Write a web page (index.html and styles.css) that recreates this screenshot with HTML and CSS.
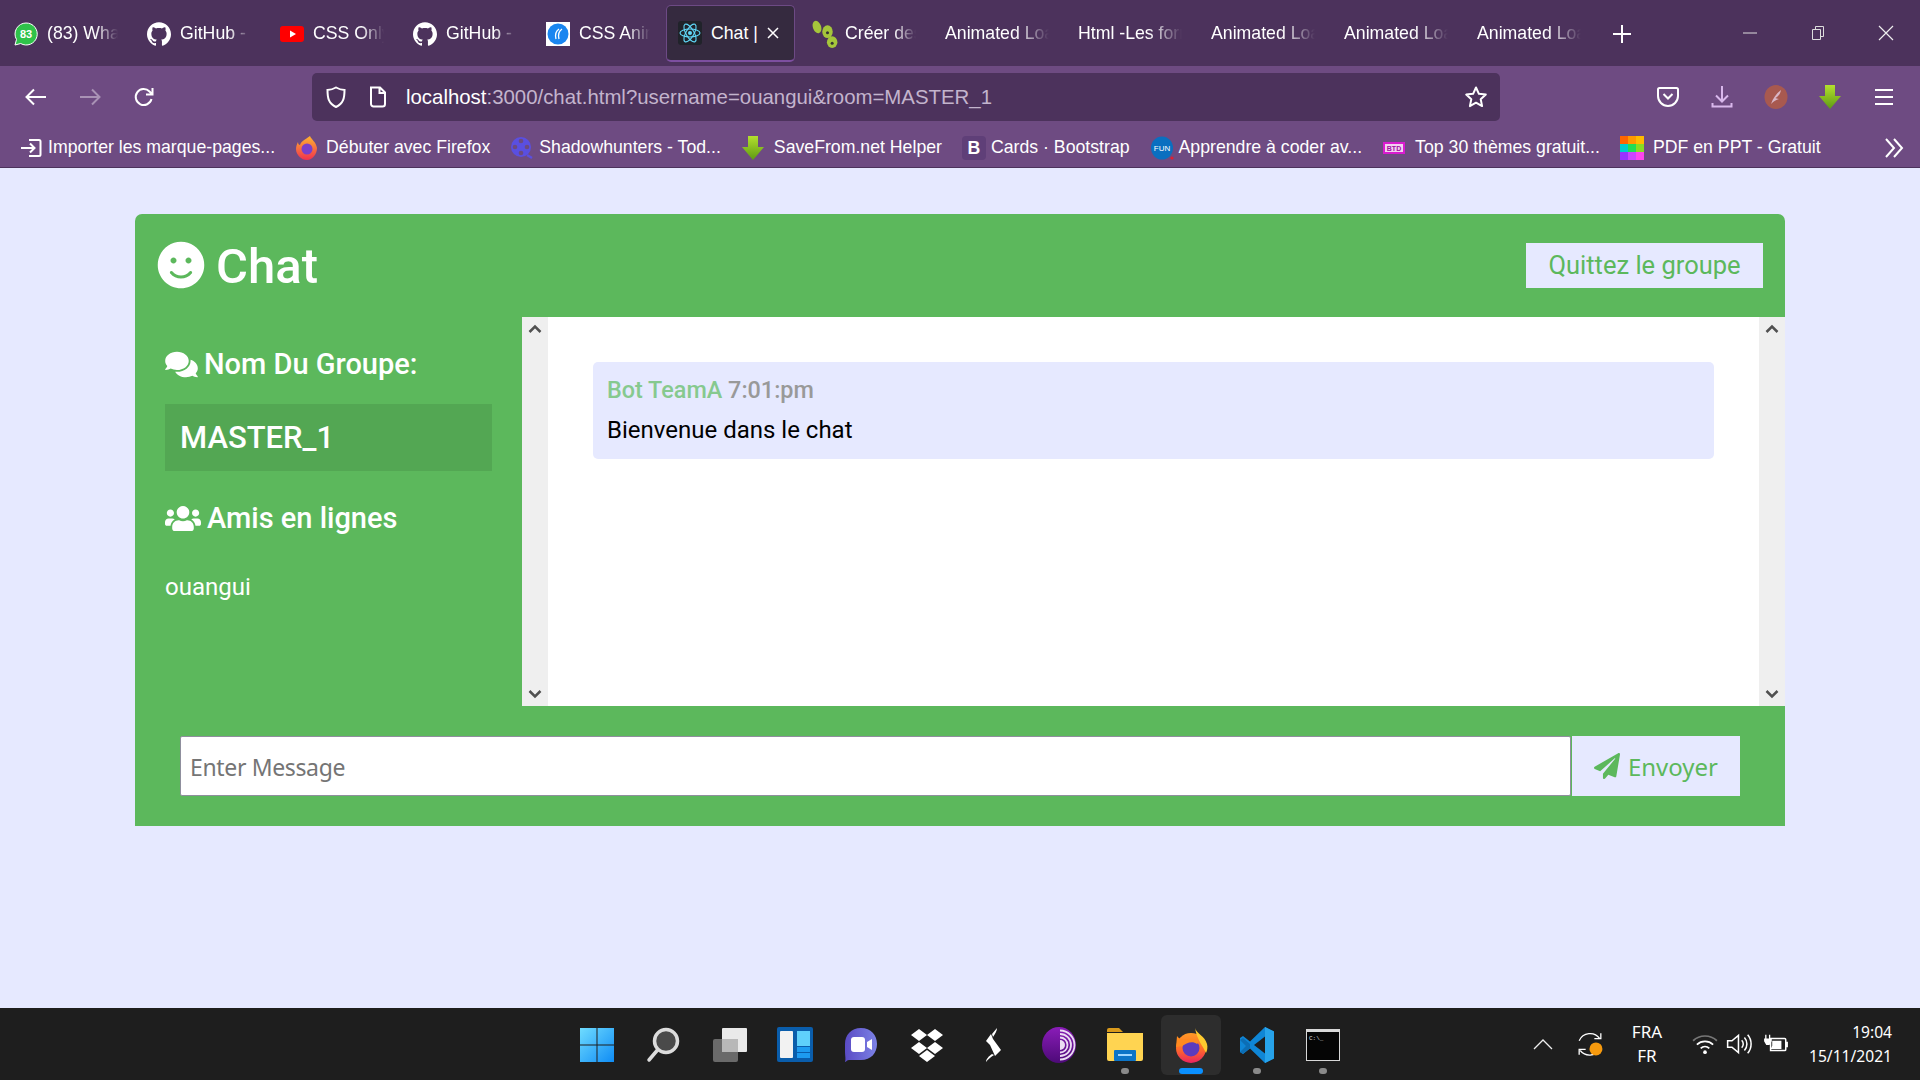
FILE: index.html
```html
<!DOCTYPE html>
<html lang="fr">
<head>
  <meta charset="UTF-8" />
  <title>Chat | TeamA</title>
  <link rel="stylesheet" href="styles.css">
</head>
<body>
  <div class="tabbar">
    <div class="tab">
      <svg class="favicon" viewBox="0 0 24 24"><path d="M12 1a11 11 0 0 0-9.500 16.500L1 23l5.700-1.500A11 11 0 1 0 12 1z" fill="#2fc24a" stroke="#fff" stroke-width="1"/><text x="12" y="16" class="fav-count">83</text></svg>
      <span class="tab-label">(83) WhatsApp</span>
    </div>
    <div class="tab">
      <svg class="favicon" viewBox="0 0 24 24"><path fill="#fff" d="M12 .297c-6.630 0-12 5.373-12 12 0 5.303 3.438 9.800 8.205 11.385.600.113.820-.258.820-.577 0-.285-.010-1.040-.015-2.040-3.338.724-4.042-1.610-4.042-1.610C4.422 18.070 3.633 17.700 3.633 17.700c-1.087-.744.084-.729.084-.729 1.205.084 1.838 1.236 1.838 1.236 1.070 1.835 2.809 1.305 3.495.998.108-.776.417-1.305.760-1.605-2.665-.300-5.466-1.332-5.466-5.930 0-1.310.465-2.380 1.235-3.220-.135-.303-.540-1.523.105-3.176 0 0 1.005-.322 3.300 1.230.960-.267 1.980-.399 3-.405 1.020.006 2.040.138 3 .405 2.280-1.552 3.285-1.230 3.285-1.230.645 1.653.240 2.873.120 3.176.765.840 1.230 1.910 1.230 3.220 0 4.610-2.805 5.625-5.475 5.920.420.360.810 1.096.810 2.220 0 1.606-.015 2.896-.015 3.286 0 .315.210.690.825.570C20.565 22.092 24 17.592 24 12.297c0-6.627-5.373-12-12-12"/></svg>
      <span class="tab-label">GitHub - ouangui</span>
    </div>
    <div class="tab">
      <svg class="favicon" viewBox="0 0 24 24"><rect y="4" width="24" height="16" rx="3" fill="#f00"/><path d="M10 8.500l6 3.500-6 3.500z" fill="#fff"/></svg>
      <span class="tab-label">CSS Only Loader</span>
    </div>
    <div class="tab">
      <svg class="favicon" viewBox="0 0 24 24"><path fill="#fff" d="M12 .297c-6.630 0-12 5.373-12 12 0 5.303 3.438 9.800 8.205 11.385.600.113.820-.258.820-.577 0-.285-.010-1.040-.015-2.040-3.338.724-4.042-1.610-4.042-1.610C4.422 18.070 3.633 17.700 3.633 17.700c-1.087-.744.084-.729.084-.729 1.205.084 1.838 1.236 1.838 1.236 1.070 1.835 2.809 1.305 3.495.998.108-.776.417-1.305.760-1.605-2.665-.300-5.466-1.332-5.466-5.930 0-1.310.465-2.380 1.235-3.220-.135-.303-.540-1.523.105-3.176 0 0 1.005-.322 3.300 1.230.960-.267 1.980-.399 3-.405 1.020.006 2.040.138 3 .405 2.280-1.552 3.285-1.230 3.285-1.230.645 1.653.240 2.873.120 3.176.765.840 1.230 1.910 1.230 3.220 0 4.610-2.805 5.625-5.475 5.920.420.360.810 1.096.810 2.220 0 1.606-.015 2.896-.015 3.286 0 .315.210.690.825.570C20.565 22.092 24 17.592 24 12.297c0-6.627-5.373-12-12-12"/></svg>
      <span class="tab-label">GitHub - ouangui</span>
    </div>
    <div class="tab">
      <svg class="favicon" viewBox="0 0 24 24"><rect width="24" height="24" fill="#fff"/><circle cx="12" cy="12" r="10.500" fill="#1a86f0"/><path d="M13 7c-3 2-4 6-3 10M16 7c-3 2-4 6-3 10" fill="none" stroke="#fff" stroke-width="1.300"/></svg>
      <span class="tab-label">CSS Animation</span>
    </div>
    <div class="tab tab-active">
      <svg class="favicon" viewBox="0 0 24 24"><rect width="24" height="24" rx="3" fill="#20232a"/><g fill="none" stroke="#61dafb" stroke-width="1.100"><ellipse cx="12" cy="12" rx="10" ry="4"/><ellipse cx="12" cy="12" rx="10" ry="4" transform="rotate(60 12 12)"/><ellipse cx="12" cy="12" rx="10" ry="4" transform="rotate(120 12 12)"/></g><circle cx="12" cy="12" r="2" fill="#61dafb"/></svg>
      <span class="tab-label tab-label-short">Chat |</span>
      <svg class="tab-close" viewBox="0 0 12 12"><path d="M1 1l10 10M11 1L1 11" stroke="#fff" stroke-width="1.500"/></svg>
    </div>
    <div class="tab">
      <svg class="favicon favicon-wide" viewBox="0 0 24 24"><g fill="#a5c63b"><ellipse cx="6" cy="6" rx="3.500" ry="5.500" transform="rotate(-20 6 6)"/><ellipse cx="15" cy="10" rx="4.500" ry="5.500"/><ellipse cx="19" cy="19" rx="4.500" ry="5"/></g><circle cx="15" cy="11" r="1.300" fill="#333"/><circle cx="19" cy="20" r="1.300" fill="#333"/></svg>
      <span class="tab-label">Créer des animations</span>
    </div>
    <div class="tab"><span class="tab-label">Animated Loaders</span></div>
    <div class="tab"><span class="tab-label">Html -Les formulaires</span></div>
    <div class="tab"><span class="tab-label">Animated Loaders</span></div>
    <div class="tab"><span class="tab-label">Animated Loaders</span></div>
    <div class="tab"><span class="tab-label">Animated Loaders</span></div>
    <svg class="new-tab" viewBox="0 0 18 18"><path d="M9 0v18M0 9h18" stroke="#fff" stroke-width="2"/></svg>
    <div class="window-controls">
      <div class="win-btn"><svg viewBox="0 0 16 16"><path d="M1 8h14" stroke="#ddd" stroke-width="1"/></svg></div>
      <div class="win-btn"><svg viewBox="0 0 16 16"><path d="M2.500 4.500h8v10h-8zM5.500 4V1.500h8v10H11" fill="none" stroke="#ddd" stroke-width="1"/></svg></div>
      <div class="win-btn"><svg viewBox="0 0 16 16"><path d="M1 1l14 14M15 1L1 15" stroke="#eee" stroke-width="1.200"/></svg></div>
    </div>
  </div>

  <div class="toolbar">
    <div class="tool-btn"><svg viewBox="0 0 24 24"><path d="M22 12H3M10 4.500L2.500 12l7.500 7.500" fill="none" stroke="#fff" stroke-width="2"/></svg></div>
    <div class="tool-btn"><svg viewBox="0 0 24 24"><path d="M2 12h19M14 4.500l7.500 7.500-7.500 7.500" fill="none" stroke="#a992b5" stroke-width="2"/></svg></div>
    <div class="tool-btn"><svg viewBox="0 0 24 24"><path d="M19.500 14a8 8 0 1 1-2-7.500L20 9M20.500 3v6.500H14" fill="none" stroke="#fff" stroke-width="2"/></svg></div>
    <div class="urlbar">
      <svg class="url-icon" viewBox="0 0 24 24"><path d="M12 2.500c3 1.700 5.500 2.300 8.500 2.500 0 8-1 13.500-8.500 17C4.500 18.500 3.500 13 3.500 5c3-.2 5.500-.8 8.500-2.500z" fill="none" stroke="#fff" stroke-width="2"/></svg>
      <svg class="url-icon" viewBox="0 0 24 24"><path d="M5 2.500h9l5 5V19a2.500 2.500 0 0 1-2.500 2.500h-9A2.500 2.500 0 0 1 5 19zM13.500 2.500V8H19" fill="none" stroke="#fff" stroke-width="2"/></svg>
      <span class="url-text"><span class="url-host">localhost</span>:3000/chat.html?username=ouangui&amp;room=MASTER_1</span>
      <svg class="url-icon url-star" viewBox="0 0 24 24"><path d="M12 2.500l2.900 6.300 6.900.8-5.100 4.700 1.400 6.800-6.100-3.400-6.100 3.400 1.400-6.800L2.200 9.600l6.900-.8z" fill="none" stroke="#fff" stroke-width="2" stroke-linejoin="round"/></svg>
    </div>
    <div class="tool-group">
      <div class="tool-btn"><svg viewBox="0 0 24 24"><path d="M3.500 3h17a1.500 1.500 0 0 1 1.500 1.500V11a10 10 0 0 1-20 0V4.500A1.500 1.500 0 0 1 3.500 3zM7.500 9l4.500 4.500L16.500 9" fill="none" stroke="#fff" stroke-width="2"/></svg></div>
      <div class="tool-btn"><svg viewBox="0 0 24 24"><path d="M12 1v15M6 10.500l6 6 6-6M2.500 18v3.500h19V18" fill="none" stroke="#d9b8ec" stroke-width="2"/></svg></div>
      <div class="tool-btn"><svg viewBox="0 0 24 24"><ellipse cx="12" cy="12" rx="11.500" ry="12" fill="#a8594f"/><path d="M17 5C13 8 9 13 7 19c3-3 5-4 8-5-2-.2-3-.5-3.500-1C15 11 16.500 8 17 5z" fill="#d9b6c6"/></svg></div>
      <div class="tool-btn"><svg viewBox="0 0 24 24"><defs><linearGradient id="sf" x1="0" y1="0" x2="0" y2="1"><stop offset="0" stop-color="#b4e02e"/><stop offset="1" stop-color="#5d9a12"/></linearGradient></defs><path d="M7 0h10v11h6L12 24 1 11h6z" fill="url(#sf)"/></svg></div>
      <div class="tool-btn"><svg viewBox="0 0 24 24"><path d="M3 5h18M3 12h18M3 19h18" stroke="#fff" stroke-width="2"/></svg></div>
    </div>
  </div>

  <div class="bookmarks">
    <div class="bookmark bookmark-narrow">
      <svg class="bm-icon" viewBox="0 0 24 24"><path d="M10 4h10a1.500 1.500 0 0 1 1.500 1.500v13A1.500 1.500 0 0 1 20 20H10M2 12h13M11 7.500l4.500 4.500-4.500 4.500" fill="none" stroke="#fff" stroke-width="2"/></svg>
      Importer les marque-pages...
    </div>
    <div class="bookmark">
      <svg class="bm-icon" viewBox="0 0 24 24"><defs><linearGradient id="ffb" x1="0" y1="0" x2="0" y2="1"><stop offset="0" stop-color="#ffb52e"/><stop offset="1" stop-color="#f0304f"/></linearGradient></defs><path d="M15 0c1 3 6 6 7 12 0 6-4.500 12-10 12S1 19 1 13c0-3 1-5 2-7 0 2 1 3 2 3 1-4 5-5 10-9z" fill="url(#ffb)"/><circle cx="12" cy="13" r="5.500" fill="#7b3fc9"/></svg>
      Débuter avec Firefox
    </div>
    <div class="bookmark bookmark-narrow">
      <svg class="bm-icon" viewBox="0 0 24 24"><circle cx="11" cy="11" r="10" fill="#5a4fe0"/><g fill="#6c4a80"><circle cx="11" cy="5" r="2.300"/><circle cx="11" cy="17" r="2.300"/><circle cx="5" cy="11" r="2.300"/><circle cx="17" cy="11" r="2.300"/></g><path d="M17 19l5 3" stroke="#5a4fe0" stroke-width="2.500"/></svg>
      Shadowhunters - Tod...
    </div>
    <div class="bookmark bookmark-wide">
      <svg class="bm-icon" viewBox="0 0 24 24"><path d="M7 0h10v11h6L12 24 1 11h6z" fill="url(#sf)"/></svg>
      SaveFrom.net Helper
    </div>
    <div class="bookmark bookmark-narrow">
      <span class="bm-b">B</span>
      Cards · Bootstrap
    </div>
    <div class="bookmark bookmark-narrow">
      <svg class="bm-icon" viewBox="0 0 24 24"><ellipse cx="12" cy="12" rx="11" ry="11.500" fill="#0a6fc0"/><text x="12" y="15" class="fav-fun">FUN</text><circle cx="22" cy="22" r="1.600" fill="#e02030"/></svg>
      Apprendre à coder av...
    </div>
    <div class="bookmark bookmark-wide">
      <svg class="bm-icon" viewBox="0 0 24 24"><rect x="1" y="6" width="22" height="12" fill="#d91bd0"/><rect x="3" y="8" width="18" height="8" fill="#f3d1f0"/><text x="12" y="15" class="fav-btd">BTD</text></svg>
      Top 30 thèmes gratuit...
    </div>
    <div class="bookmark bookmark-wide">
      <svg class="bm-icon" viewBox="0 0 24 24"><rect width="8" height="8" fill="#f60"/><rect x="8" width="8" height="8" fill="#f90"/><rect x="16" width="8" height="8" fill="#fb0"/><rect y="8" width="8" height="8" fill="#0cc"/><rect x="8" y="8" width="8" height="8" fill="#2d5"/><rect x="16" y="8" width="8" height="8" fill="#8d2"/><rect y="16" width="8" height="8" fill="#93f"/><rect x="8" y="16" width="8" height="8" fill="#c4f"/><rect x="16" y="16" width="8" height="8" fill="#f4e"/></svg>
      PDF en PPT - Gratuit
    </div>
    <svg class="bm-more" viewBox="0 0 24 24"><path d="M4 3l8 9-8 9M12 3l8 9-8 9" fill="none" stroke="#fff" stroke-width="2"/></svg>
  </div>

  <main class="page">
    <div class="chat-container">
      <header class="chat-header">
        <h1 class="chat-title">
          <svg class="smile" viewBox="0 0 496 512"><path fill="#fff" d="M248 8C111 8 0 119 0 256s111 248 248 248 248-111 248-248S385 8 248 8zm80 168c17.700 0 32 14.300 32 32s-14.300 32-32 32-32-14.300-32-32 14.300-32 32-32zm-160 0c17.700 0 32 14.300 32 32s-14.300 32-32 32-32-14.300-32-32 14.300-32 32-32zm194.800 170.200C334.300 380.400 292.500 400 248 400s-86.300-19.600-114.800-53.800c-13.600-16.300 11-36.700 24.600-20.500 22.400 26.900 55.200 42.200 90.200 42.200s67.800-15.400 90.200-42.200c13.400-16.200 38.100 4.200 24.600 20.500z"/></svg>
          <span class="chat-word">Chat</span>
        </h1>
        <a class="btn-leave">Quittez le groupe</a>
      </header>

      <div class="chat-main">
        <aside class="sidebar">
          <h3 class="side-title first">
            <svg class="side-icon" viewBox="0 0 576 512"><path fill="#fff" d="M416 192c0-88.400-93.100-160-208-160S0 103.600 0 192c0 34.300 14.100 65.900 38 92-13.400 30.200-35.500 54.200-35.800 54.500-2.200 2.300-2.800 5.700-1.500 8.700S4.800 352 8 352c36.600 0 66.900-12.300 88.700-25 32.200 15.700 70.300 25 111.300 25 114.900 0 208-71.600 208-160zm122 220c23.900-26 38-57.700 38-92 0-66.900-53.500-124.200-129.300-148.100.9 6.600 1.300 13.300 1.300 20.100 0 105.900-107.700 192-240 192-10.800 0-21.300-.8-31.700-1.900C207.800 439.600 281.800 480 368 480c41 0 79.100-9.200 111.300-25 21.800 12.700 52.100 25 88.700 25 3.200 0 6.100-1.900 7.300-4.800 1.300-2.900.7-6.300-1.500-8.700-.3-.3-22.400-24.200-35.800-54.500z"/></svg>
            Nom Du Groupe:
          </h3>
          <div class="room-name">MASTER_1</div>
          <h3 class="side-title">
            <svg class="side-icon side-icon-wide" viewBox="0 0 640 512"><path fill="#fff" d="M96 224c35.300 0 64-28.700 64-64s-28.700-64-64-64-64 28.700-64 64 28.700 64 64 64zm448 0c35.300 0 64-28.700 64-64s-28.700-64-64-64-64 28.700-64 64 28.700 64 64 64zm32 32h-64c-17.600 0-33.500 7.100-45.100 18.600 40.300 22.100 68.900 62 75.100 109.400h66c17.700 0 32-14.300 32-32v-32c0-35.300-28.700-64-64-64zm-256 0c61.900 0 112-50.100 112-112S381.900 32 320 32 208 82.100 208 144s50.100 112 112 112zm76.800 32h-8.300c-20.800 10-43.900 16-68.500 16s-47.600-6-68.500-16h-8.300C179.600 288 128 339.600 128 403.200V432c0 26.500 21.500 48 48 48h288c26.500 0 48-21.500 48-48v-28.800c0-63.600-51.600-115.200-115.200-115.200zm-223.700-13.400C161.500 263.100 145.600 256 128 256H64c-35.300 0-64 28.700-64 64v32c0 17.700 14.300 32 32 32h65.900c6.300-47.400 34.900-87.300 75.200-109.400z"/></svg>
            Amis en lignes
          </h3>
          <ul class="users">
            <li>ouangui</li>
          </ul>
        </aside>

        <div class="scrollbar">
          <svg class="chevron" viewBox="0 0 14 10"><path d="M1.500 8L7 2.500 12.500 8" fill="none" stroke="#505050" stroke-width="2.500"/></svg>
          <svg class="chevron" viewBox="0 0 14 10"><path d="M1.500 2L7 7.500 12.500 2" fill="none" stroke="#505050" stroke-width="2.500"/></svg>
        </div>
        <div class="messages">
          <div class="message">
            <p class="meta"><span class="meta-name">Bot TeamA</span> 7:01:pm</p>
            <p class="text">Bienvenue dans le chat</p>
          </div>
        </div>
        <div class="scrollbar">
          <svg class="chevron" viewBox="0 0 14 10"><path d="M1.500 8L7 2.500 12.500 8" fill="none" stroke="#505050" stroke-width="2.500"/></svg>
          <svg class="chevron" viewBox="0 0 14 10"><path d="M1.500 2L7 7.500 12.500 2" fill="none" stroke="#505050" stroke-width="2.500"/></svg>
        </div>
      </div>

      <div class="chat-form">
        <input class="msg-input" type="text" placeholder="Enter Message" />
        <button class="btn-send">
          <svg class="send-icon" viewBox="0 0 512 512"><path fill="#5cb85c" d="M476 3.200L12.500 270.600c-18.100 10.400-15.800 35.600 2.200 43.200L121 358.400l287.300-253.200c5.500-4.900 13.300 2.600 8.600 8.300L176 407v80.500c0 23.600 28.500 32.900 42.500 15.800L282 426l124.600 52.200c14.200 6 30.400-2.900 33-18.200l72-432C515 7.800 493.300-6.800 476 3.200z"/></svg>
          Envoyer
        </button>
      </div>
    </div>
  </main>

  <footer class="taskbar">
    <div></div>
    <div class="task-icons">
      <div class="task-item">
        <svg viewBox="0 0 36 36"><defs><linearGradient id="win" x1="0" y1="0" x2="1" y2="1"><stop offset="0" stop-color="#6fdcff"/><stop offset="1" stop-color="#0f8cf5"/></linearGradient></defs><path d="M1 1h16.500v16.500H1zM18.500 1H35v16.500H18.500zM1 18.500h16.500V35H1zM18.500 18.500H35V35H18.500z" fill="url(#win)"/></svg>
      </div>
      <div class="task-item">
        <svg viewBox="0 0 36 36"><circle cx="21" cy="14" r="11.500" fill="#4a4a4a" stroke="#dcdcdc" stroke-width="3.500"/><path d="M12.500 23L4 33" stroke="#dcdcdc" stroke-width="3.500" stroke-linecap="round"/></svg>
      </div>
      <div class="task-item">
        <svg viewBox="0 0 36 36"><rect x="2" y="12" width="25" height="23" rx="2" fill="#6a6a6a"/><rect x="11" y="1" width="25" height="24" rx="1" fill="#e9e9e9"/><rect x="11" y="12" width="16" height="13" fill="#b8b8b8"/></svg>
      </div>
      <div class="task-item">
        <svg viewBox="0 0 36 36"><rect width="36" height="35" rx="2" fill="#0a5dab"/><rect x="3" y="4" width="13" height="27" rx="1" fill="#f2f2f2"/><rect x="20" y="4" width="13" height="15" fill="#5fd0fb"/><rect x="20" y="20" width="13" height="5" fill="#1d9bf0"/><rect x="20" y="26" width="13" height="5" fill="#1d9bf0"/></svg>
      </div>
      <div class="task-item">
        <svg viewBox="0 0 36 36"><defs><linearGradient id="chat" x1="0" y1="0" x2="1" y2="0"><stop offset="0" stop-color="#5a4bc4"/><stop offset="1" stop-color="#7c82e6"/></linearGradient></defs><path d="M18 1c10 0 16 7 16 16s-6 16-16 16H6c-2 0-3 2-4 2 1-3 0-6 0-10V17C2 8 8 1 18 1z" fill="url(#chat)"/><rect x="8" y="10" width="14" height="15" rx="3" fill="#fff"/><path d="M24 15l5-3v11l-5-3z" fill="#fff"/></svg>
      </div>
      <div class="task-item">
        <svg viewBox="0 0 36 36"><g fill="#fff"><path d="M10 2l8 6-8 6-8-6zM26 2l8 6-8 6-8-6zM10 15l8 6-8 6-8-6zM26 15l8 6-8 6-8-6zM18 23l8 6-8 6-8-6z"/></g></svg>
      </div>
      <div class="task-item">
        <svg viewBox="0 0 36 36"><path fill="#fff" d="M16 7l-5 7 4 4 5 11 6-6-8-11zM22 1c0 3-2 6-4 9l-1-3zM17 27l2 1c-3 2-6 4-8 7 0-3 3-6 6-8z"/></svg>
      </div>
      <div class="task-item">
        <svg viewBox="0 0 36 36"><defs><linearGradient id="tor" x1="0" y1="0" x2="0" y2="1"><stop offset="0" stop-color="#8a1cb8"/><stop offset="1" stop-color="#4d0a78"/></linearGradient></defs><ellipse cx="18" cy="18" rx="17" ry="18" fill="url(#tor)"/><g fill="none" stroke="#eadcf2" stroke-width="1.800"><path d="M19 10.500a7.500 7.500 0 0 1 0 15"/><path d="M19 7a11 11 0 0 1 0 22"/><path d="M19 3.500a14.500 14.500 0 0 1 0 29"/></g><path d="M19 13a5 5 0 0 1 0 10z" fill="#eadcf2"/></svg>
      </div>
      <div class="task-item has-dot">
        <svg viewBox="0 0 36 36"><path d="M0 3a2 2 0 0 1 2-2h10l4 4H0z" fill="#d99a1c"/><path d="M0 6h36v26a2 2 0 0 1-2 2H2a2 2 0 0 1-2-2z" fill="#ffd451"/><rect x="7" y="23" width="22" height="11" rx="1" fill="#0c74c7"/><rect x="11" y="27" width="14" height="2" fill="#9fd6ff"/></svg>
      </div>
      <div class="task-item task-active">
        <svg viewBox="0 0 36 36"><defs><linearGradient id="ff" x1="0" y1="0" x2="0" y2="1"><stop offset="0" stop-color="#ff9a26"/><stop offset=".55" stop-color="#ff6a2a"/><stop offset="1" stop-color="#e9235f"/></linearGradient></defs><circle cx="18" cy="21" r="15" fill="url(#ff)"/><path d="M22 1c1 5 10 8 12 16 1 3 0 7-1 9-3-7-9-13-11-25z" fill="#ffcb2e"/><path d="M4 9c2 3 5 4 10 3l-5 7-6 1z" fill="#ff8a1f"/><circle cx="18" cy="21" r="8.500" fill="#5c3bbd"/><path d="M8 20c1-7 8-10 13-8 4 1 5 4 3 5-4-3-10-2-16 3z" fill="#ff8a1f"/></svg>
      </div>
      <div class="task-item has-dot">
        <svg viewBox="0 0 36 36"><path d="M26 0l9 4.500v27L26 36 11 21.500l-7 5.500-3-2v-14l3-2 7 5.500z" fill="#0f86d6"/><path d="M26 9.500L15 18l11 8.500z" fill="#1e1e1e"/><path d="M26 0l9 4.500v27L26 36z" fill="#27a3ea"/><path d="M1 13l3-2 7 6v4l-7 6-3-2 6-6z" fill="#0c6eb5"/></svg>
      </div>
      <div class="task-item has-dot">
        <svg viewBox="0 0 36 36"><rect x="1" y="2" width="34" height="32" fill="#d8d8d8"/><rect x="2" y="5" width="32" height="28" fill="#050505"/><text x="4" y="13" class="term-text">C:\_</text></svg>
      </div>
    </div>
    <div class="tray">
      <svg class="tray-chevron" viewBox="0 0 20 12"><path d="M1 11l9-9 9 9" fill="none" stroke="#eee" stroke-width="1.300"/></svg>
      <div class="tray-sync">
        <svg viewBox="0 0 24 24"><path d="M2 9a11 11 0 0 1 19-2M22 2v5h-6M21 17a11 11 0 0 1-18 1M2 22v-5h6" fill="none" stroke="#fff" stroke-width="1.200"/><circle cx="17.500" cy="16.500" r="6" fill="#f79a0e"/></svg>
      </div>
      <div class="tray-lang"><span>FRA</span><span>FR</span></div>
      <svg class="tray-icon tray-wifi" viewBox="0 0 24 24"><path d="M1 9a16 16 0 0 1 22 0" fill="none" stroke="#777" stroke-width="1.600"/><path d="M4.500 12.500a11 11 0 0 1 15 0M8 16a6 6 0 0 1 8 0" fill="none" stroke="#fff" stroke-width="1.600"/><circle cx="12" cy="19.500" r="1.700" fill="#fff"/></svg>
      <svg class="tray-icon" viewBox="0 0 24 24"><path d="M1.500 9h4l6-5v16l-6-5h-4z" fill="none" stroke="#fff" stroke-width="1.400"/><path d="M14.500 8.500a5 5 0 0 1 0 7M17 6a9 9 0 0 1 0 12M20 3.500a13 13 0 0 1 0 17" fill="none" stroke="#fff" stroke-width="1.400"/></svg>
      <svg class="tray-icon tray-battery" viewBox="0 0 24 24"><path d="M7 7h13a1 1 0 0 1 1 1v9a1 1 0 0 1-1 1H7z" fill="none" stroke="#fff" stroke-width="1.400"/><path d="M8.500 9H17v7.500H7l1.500-3zM1 7h7v2.500L6 13H3L1 9.500zM2 3.500h1.200V7H2zM5.500 3.500h1.200V7H5.500zM21 10h2v5h-2z" fill="#fff"/></svg>
      <div class="clock"><span>19:04</span><span>15/11/2021</span></div>
    </div>
  </footer>
</body>
</html>
```

FILE: styles.css
```css
* {
  box-sizing: border-box;
}
html, body {
  margin: 0;
  height: 100%;
}
body {
  display: flex;
  flex-direction: column;
  height: 1080px;
  overflow: hidden;
  background: #e6e9ff;
  font-family: Roboto, Arial, sans-serif;
}

/* browser chrome */
.tabbar {
  display: flex;
  height: 66px;
  background: #4c325c;
  color: #fff;
  font: 17.7px "Liberation Sans", Arial, sans-serif;
}
.tab {
  display: flex;
  flex: none;
  align-items: center;
  gap: 9px;
  width: 129px;
  height: 57px;
  margin: 5px 2px 0;
  padding: 0 12px 0 11px;
  border: 1px solid transparent;
}
.tab-active {
  margin: 5px 3px 0 1px;
  padding-right: 8px;
  background: #352a3f;
  border: 1px solid #6d4a85;
  border-bottom: 2px solid #7d4fa0;
  border-radius: 5px;
}
.favicon {
  flex: none;
  width: 24px;
  height: 24px;
}
.favicon-wide {
  width: 28px;
  height: 28px;
  margin: 0 -2px 0 -2px;
}
.fav-count {
  font: bold 11px "Liberation Sans", Arial, sans-serif;
  fill: #fff;
  text-anchor: middle;
}
.tab-label {
  flex: 1;
  overflow: hidden;
  white-space: nowrap;
  -webkit-mask-image: linear-gradient(to right, #000 68%, transparent);
  mask-image: linear-gradient(to right, #000 68%, transparent);
}
.tab-label-short {
  flex: none;
  -webkit-mask-image: none;
  mask-image: none;
}
.tab-close {
  flex: none;
  width: 12px;
  height: 12px;
}
.new-tab {
  flex: none;
  width: 18px;
  height: 18px;
  margin: 25px 0 0 17px;
}
.window-controls {
  display: flex;
  margin-left: auto;
}
.win-btn {
  display: flex;
  align-items: center;
  justify-content: center;
  width: 68px;
  height: 66px;
}
.win-btn svg {
  width: 16px;
  height: 16px;
}

.toolbar {
  display: flex;
  align-items: center;
  height: 62px;
  padding: 0 9px;
  background: #6e4b82;
}
.tool-btn {
  display: flex;
  align-items: center;
  justify-content: center;
  width: 54px;
  height: 48px;
}
.tool-btn svg {
  width: 24px;
  height: 24px;
}
.urlbar {
  display: flex;
  align-items: center;
  flex: none;
  width: 1188px;
  height: 48px;
  margin-left: 141px;
  padding: 0 12px;
  background: #4c325c;
  border-radius: 5px;
}
.url-icon {
  flex: none;
  width: 24px;
  height: 24px;
  margin-right: 18px;
}
.url-text {
  margin-left: -2px;
  color: #c3b4cd;
  font: 20.4px "Liberation Sans", Arial, sans-serif;
  white-space: nowrap;
}
.url-host {
  color: #fff;
}
.url-star {
  margin: 0 0 0 auto;
}
.tool-group {
  display: flex;
  margin-left: auto;
}

.bookmarks {
  display: flex;
  align-items: center;
  gap: 20px;
  height: 40px;
  padding: 0 14px 0 19px;
  background: #6e4b82;
  border-bottom: 1px solid #4c325c;
  color: #fff;
  font: 17.7px "Liberation Sans", Arial, sans-serif;
  white-space: nowrap;
}
.bookmark {
  display: flex;
  align-items: center;
  gap: 7px;
}
.bookmark-narrow {
  gap: 5px;
}
.bookmark-wide {
  gap: 9px;
}
.bm-icon {
  width: 24px;
  height: 24px;
}
.bm-b {
  width: 24px;
  height: 24px;
  background: #5f3f78;
  border-radius: 4px;
  font-weight: bold;
  line-height: 24px;
  text-align: center;
}
.fav-fun {
  font: 8px "Liberation Sans", Arial, sans-serif;
  fill: #fff;
  text-anchor: middle;
}
.fav-btd {
  font: bold 7px "Liberation Sans", Arial, sans-serif;
  fill: #a010a0;
  text-anchor: middle;
}
.bm-more {
  width: 24px;
  height: 24px;
  margin-left: auto;
}

/* chat page */
.page {
  flex: 1;
  padding: 46px 135px 0;
}
.chat-container {
  width: 1650px;
}
.chat-header {
  display: flex;
  align-items: center;
  justify-content: space-between;
  height: 103px;
  padding: 0 22px;
  background: #5cb85c;
  border-radius: 7px 7px 0 0;
}
.chat-title {
  display: flex;
  align-items: center;
  gap: 11px;
  margin: 0;
  color: #fff;
  font-size: 49px;
  font-weight: 500;
  line-height: 1.2;
}
.chat-word {
  padding-top: 3px;
}
.smile {
  width: 48px;
  height: 48px;
}
.btn-leave {
  width: 237px;
  height: 45px;
  background: #e6e9ff;
  color: #5cb85c;
  font-size: 25.5px;
  line-height: 45px;
  text-align: center;
}

.chat-main {
  display: flex;
  height: 389px;
  background: #fff;
}
.sidebar {
  flex: none;
  width: 387px;
  padding: 32px 30px 0;
  background: #5cb85c;
  color: #fff;
}
.side-title {
  display: flex;
  align-items: center;
  gap: 6px;
  margin: 32px 0 0;
  font-size: 29px;
  font-weight: 500;
  line-height: 31px;
}
.side-title.first {
  margin-top: 0;
}
.side-icon {
  width: 33px;
  height: 29px;
}
.side-icon-wide {
  width: 36px;
}
.room-name {
  height: 67px;
  margin-top: 24px;
  padding: 0 15px;
  background: rgba(0, 0, 0, 0.09);
  font-size: 31px;
  font-weight: 500;
  line-height: 67px;
}
.users {
  margin: 39px 0 0;
  padding: 0;
  list-style: none;
  font-size: 24px;
  line-height: 29px;
}
.scrollbar {
  display: flex;
  flex: none;
  flex-direction: column;
  align-items: center;
  justify-content: space-between;
  width: 26px;
  padding: 7px 0;
  background: #efefef;
}
.chevron {
  width: 14px;
  height: 10px;
}
.messages {
  flex: 1;
  padding: 45px;
}
.message {
  padding: 14px 15px 14px 14px;
  background: #e6e9ff;
  border-radius: 5px;
  font-size: 24px;
  line-height: 29px;
}
.meta {
  margin: 0 0 11px;
  color: #999;
  font-size: 23.4px;
  font-weight: 500;
}
.meta-name {
  color: #86c98f;
}
.text {
  margin: 0;
  color: #000;
}

.chat-form {
  display: flex;
  align-items: center;
  height: 120px;
  padding: 0 45px;
  background: #5cb85c;
}
.msg-input {
  flex: 1;
  height: 60px;
  padding: 2px 9px 0;
  background: #fff;
  border: 1px solid #8f8f9d;
  border-radius: 2px;
  font: 23px "Noto Sans", Tahoma, sans-serif;
  letter-spacing: -0.35px;
}
.msg-input::placeholder {
  color: #757575;
  opacity: 1;
}
.btn-send {
  display: flex;
  flex: none;
  align-items: center;
  justify-content: center;
  gap: 8px;
  width: 168px;
  height: 60px;
  margin-left: 1px;
  padding: 0;
  background: #e6e9ff;
  border: 0;
  color: #5cb85c;
  font: 24px "Noto Sans", Tahoma, sans-serif;
}
.send-icon {
  width: 26px;
  height: 26px;
}

/* windows taskbar */
.taskbar {
  display: grid;
  grid-template-columns: 1fr auto 1fr;
  height: 72px;
  padding-top: 7px;
  background: #1e1e1e;
  color: #fff;
}
.task-icons {
  display: flex;
  gap: 6px;
}
.task-item {
  display: flex;
  flex-direction: column;
  align-items: center;
  width: 60px;
  height: 60px;
  padding-top: 12px;
  border-radius: 6px;
}
.task-item svg {
  width: 36px;
  height: 36px;
}
.has-dot::after {
  content: "";
  width: 8px;
  height: 6px;
  margin-top: 5px;
  background: #8a8a8a;
  border-radius: 3px;
}
.task-active {
  background: #2d2d2d;
}
.task-active::after {
  content: "";
  width: 24px;
  height: 6px;
  margin-top: 5px;
  background: #0a90ff;
  border-radius: 3px;
}
.term-text {
  font: 6px "Liberation Mono", monospace;
  fill: #ddd;
}
.tray {
  display: flex;
  align-items: center;
  justify-content: flex-end;
  height: 58px;
  padding-right: 28px;
}
.tray-chevron {
  width: 20px;
  height: 12px;
  margin-right: 24px;
}
.tray-sync {
  width: 26px;
  height: 26px;
  margin-right: 19px;
}
.tray-lang, .clock {
  display: flex;
  flex-direction: column;
  gap: 4px;
  font: 17px/20px "Noto Sans", "Open Sans", sans-serif;
}
.tray-lang {
  align-items: center;
  width: 50px;
  margin-right: 18px;
}
.tray-icon {
  width: 30px;
  height: 26px;
  margin-right: 7px;
}
.tray-wifi {
  margin-right: 4px;
}
.tray-battery {
  margin-right: 11px;
}
.clock {
  align-items: flex-end;
  width: 90px;
  font-size: 15.6px;
}
```
